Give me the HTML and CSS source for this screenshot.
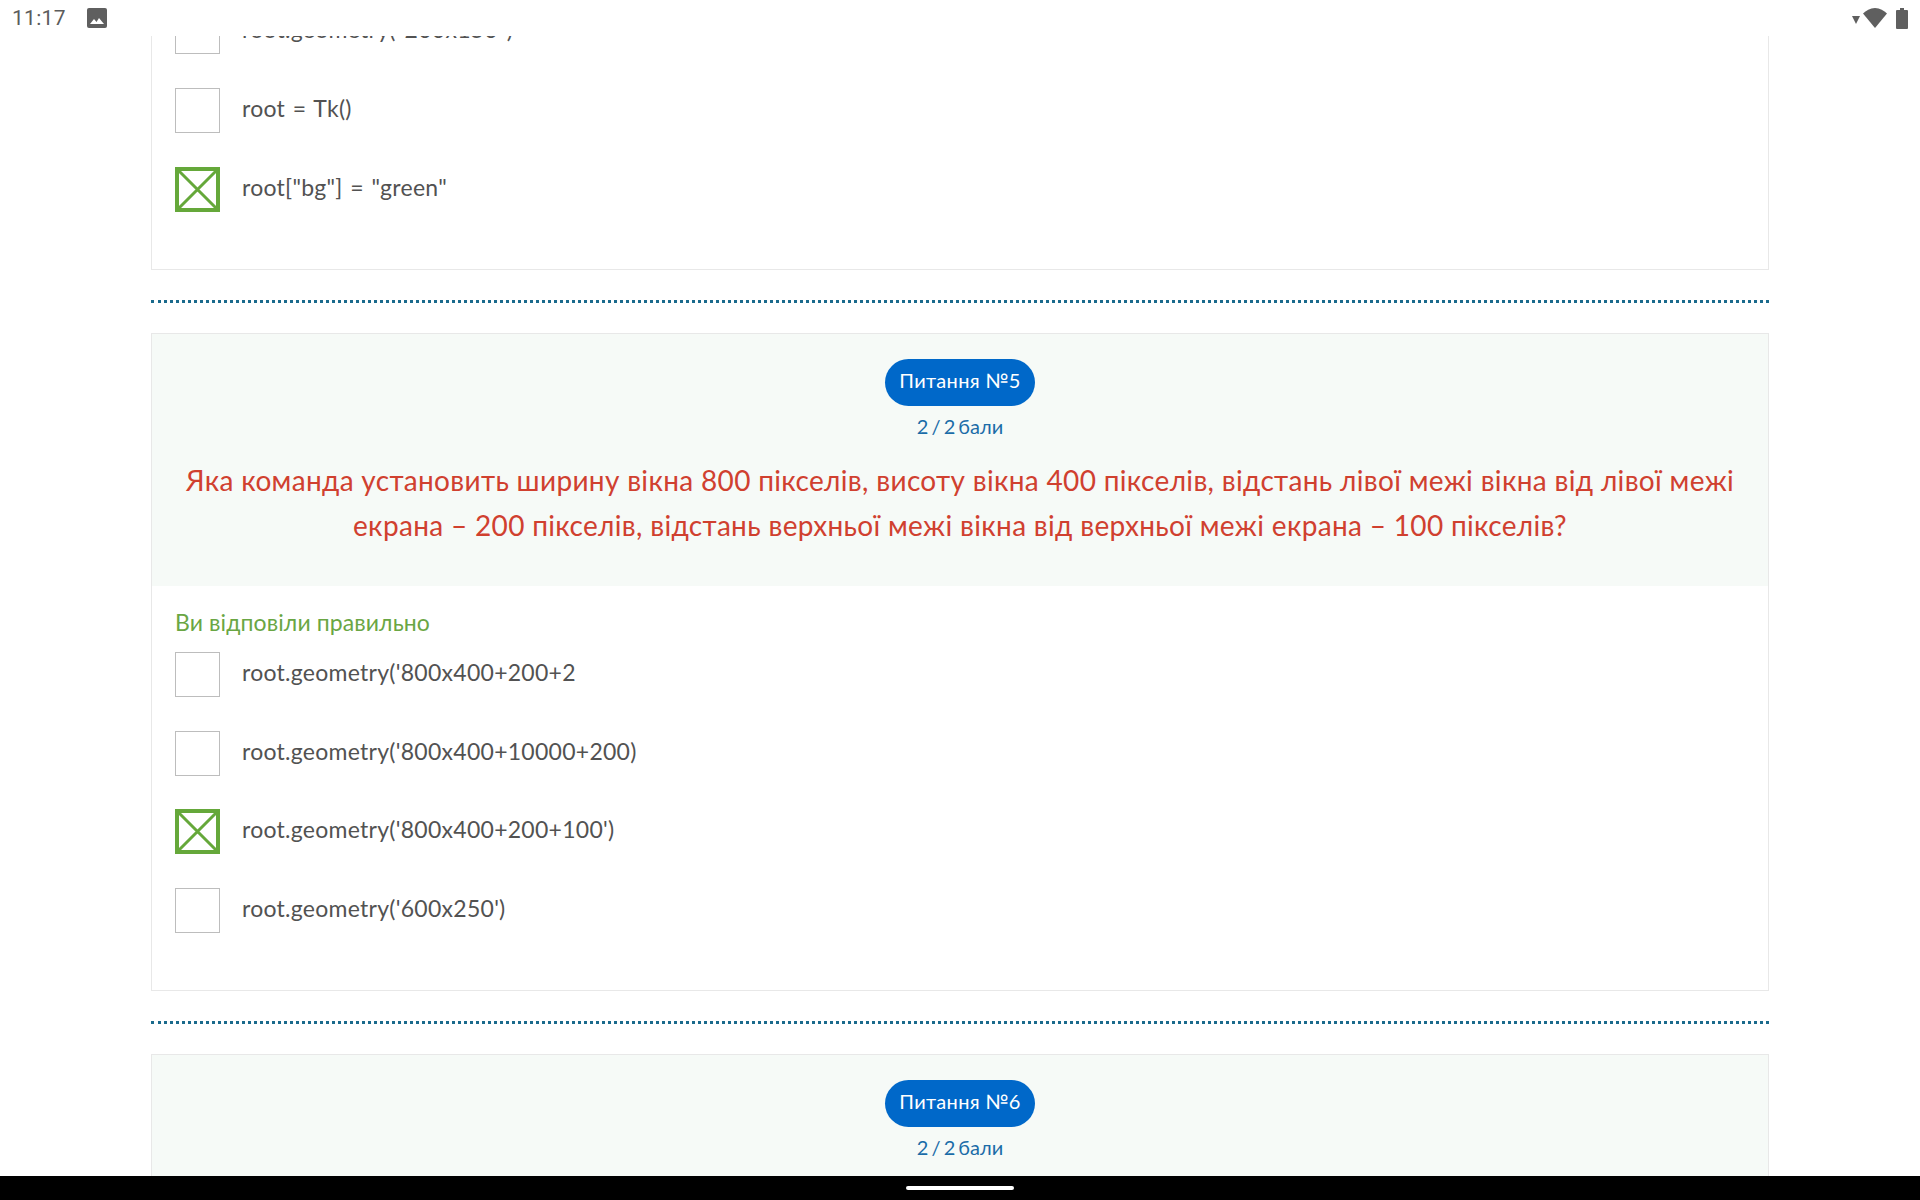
FILE: index.html
```html
<!DOCTYPE html>
<html lang="uk">
<head>
<meta charset="utf-8">
<title>Тест</title>
<link rel="stylesheet" href="styles.css">
</head>
<body>
<div class="screen">
  <header class="status">
    <div class="status-left">
      <span class="time">11:17</span>
      <svg class="img-icon" viewBox="0 0 20 20" width="20" height="20"><path fill="#5f5f5f" fill-rule="evenodd" d="M2 0h16a2 2 0 0 1 2 2v16a2 2 0 0 1-2 2H2a2 2 0 0 1-2-2V2a2 2 0 0 1 2-2z"/><path fill="#fff" d="M3 16l4-5 2.5 3 2.5-4 5 6z"/></svg>
    </div>
    <div class="status-right">
      <svg class="tri" viewBox="0 0 8 8" width="8" height="8"><path fill="#5f5f5f" d="M0 0h8L4 8z"/></svg>
      <svg class="wifi" viewBox="0 0 24 20" width="24" height="20"><path fill="#5f5f5f" d="M12 20L0 5.5C3 2.5 7 0 12 0s9 2.500 12 5.500z"/></svg>
      <svg class="battery" viewBox="0 0 12 21" width="12" height="21"><path fill="#5f5f5f" d="M4 0h4v2h3a1 1 0 0 1 1 1v17a1 1 0 0 1-1 1H1a1 1 0 0 1-1-1V3a1 1 0 0 1 1-1h3z"/></svg>
    </div>
  </header>
  <main class="content">
    <section class="card card-scrolled">
      <div class="options">
        <div class="option"><span class="box"></span><span class="label">root.geometry("200x150")</span></div>
        <div class="option"><span class="box"></span><span class="label">root = Tk()</span></div>
        <div class="option"><span class="box checked"><svg viewBox="0 0 45 45"><path d="M2 2L43 43M43 2L2 43"/></svg></span><span class="label">root["bg"] = "green"</span></div>
      </div>
    </section>
    <hr class="divider">
    <section class="card">
      <div class="card-head">
        <span class="pill">Питання №5</span>
        <div class="points">2 / 2 бали</div>
        <h2 class="question">Яка команда установить ширину вікна 800 пікселів, висоту вікна 400 пікселів, відстань лівої межі вікна від лівої межі<br>екрана – 200 пікселів, відстань верхньої межі вікна від верхньої межі екрана – 100 пікселів?</h2>
      </div>
      <div class="verdict">Ви відповіли правильно</div>
      <div class="options">
        <div class="option"><span class="box"></span><span class="label">root.geometry('800x400+200+2</span></div>
        <div class="option"><span class="box"></span><span class="label">root.geometry('800x400+10000+200)</span></div>
        <div class="option"><span class="box checked"><svg viewBox="0 0 45 45"><path d="M2 2L43 43M43 2L2 43"/></svg></span><span class="label">root.geometry('800x400+200+100')</span></div>
        <div class="option"><span class="box"></span><span class="label">root.geometry('600x250')</span></div>
      </div>
    </section>
    <hr class="divider">
    <section class="card">
      <div class="card-head">
        <span class="pill">Питання №6</span>
        <div class="points">2 / 2 бали</div>
      </div>
    </section>
  </main>
  <footer class="navbar"><span class="home"></span></footer>
</div>
</body>
</html>
```
FILE: styles.css
```css
* { box-sizing: border-box; }
html, body { margin: 0; padding: 0; background: #fff; }
body { font-family: Lato, "Open Sans", sans-serif; }
.screen { width: 1920px; height: 1200px; display: flex; flex-direction: column; overflow: hidden; background: #fff; }
.status { flex: 0 0 36px; height: 36px; display: flex; justify-content: space-between; align-items: center; padding: 0 12px; background: #fff; position: relative; z-index: 2; }
.status-left { display: flex; align-items: center; gap: 21px; }
.time { font-family: Roboto, sans-serif; font-size: 21px; color: #5c5c5c; letter-spacing: .3px; }
.img-icon { display: block; }
.status-right { display: flex; align-items: center; }
.tri { margin-right: 3px; margin-top: 3px; }
.wifi { margin-right: 9px; }
.content { flex: 1; min-height: 0; overflow: hidden; padding: 0 151px; }
.card { border: 1px solid #e8e8e8; background: #fff; width: 1618px; }
.card-scrolled { margin-top: -27px; border-top: 0; }
.card-scrolled .options { padding-bottom: 57.75px; }
.card-head { background: #f6faf7; text-align: center; padding-top: 25px; height: 252px; }
.pill { display: inline-block; height: 47px; line-height: 43px; padding: 0 14.5px; border-radius: 24px; background: #0068c9; color: #fff; font-size: 20px; letter-spacing: .3px; }
.points { margin-top: 8px; line-height: 24px; font-size: 20px; word-spacing: -2px; color: #1b6ca8; }
.question { margin: 20px 0 0; font-size: 28px; line-height: 45px; font-weight: 400; letter-spacing: .32px; color: #d0402f; }
.verdict { margin-top: 23px; padding-left: 23px; height: 42.5px; font-size: 23px; line-height: 26px; letter-spacing: .1px; color: #6aa644; }
.options { display: flex; flex-direction: column; gap: 33.75px; padding: 0 23px 57.25px; }
.option { display: flex; align-items: center; gap: 22px; height: 45px; }
.box { flex: 0 0 45px; height: 45px; border: 1px solid #bdbdbd; display: block; }
.box.checked { border: 4px solid #65a83a; position: relative; }
.box.checked svg { position: absolute; inset: -4px; width: 45px; height: 45px; }
.box.checked path { fill: none; stroke: #65a83a; stroke-width: 3; }
.label { font-size: 23px; line-height: 28px; letter-spacing: .27px; word-spacing: 1.5px; color: #525252; margin-bottom: 5px; }
.divider { margin: 30px 0; border: 0; border-top: 3px dotted #1a6a8c; height: 0; width: 1618px; }
.navbar { flex: 0 0 24px; height: 24px; background: #000; display: flex; align-items: center; justify-content: center; position: relative; z-index: 2; }
.home { display: block; width: 108px; height: 4px; border-radius: 2px; background: #fff; }
```
